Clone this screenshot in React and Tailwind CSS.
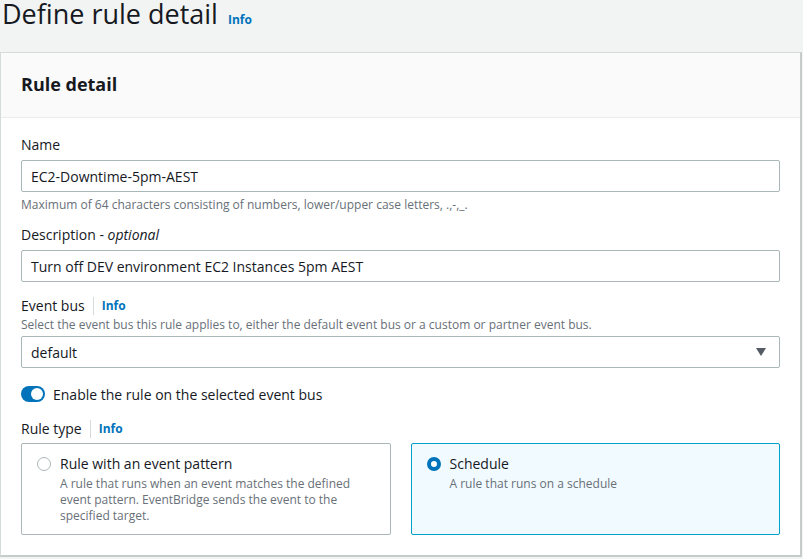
import React from "react";

const font = { fontFamily: '"Open Sans", "Noto Sans", Arial, sans-serif' };

function Info() {
  return <span className="text-[12px] font-bold text-[#0073bb]">Info</span>;
}

function LabelInfo({ children }) {
  return (
    <div className="flex items-center text-[14px] text-[#16191f] leading-[20px]">
      <span>{children}</span>
      <span className="mx-[8px] h-[18px] w-px bg-[#d5dbdb]" />
      <Info />
    </div>
  );
}

export default function App() {
  return (
    <div className="w-[803px] h-[559px] overflow-hidden bg-[#f2f3f3]" style={font}>
      <div className="flex items-start h-[52px] pl-[2px]">
        <h1 className="text-[27px] leading-[28px] text-[#16191f] font-normal">Define rule detail</h1>
        <span className="ml-[10px] mt-[9px] leading-[18px]"><Info /></span>
      </div>
      <div className="w-[802px] border border-[#d5dbdb] border-r-2 border-r-[#c6cccc] border-b-2 border-b-[#c6cccc] bg-white">
        <div className="h-[65px] bg-[#fafafa] border-b border-[#eaeded] flex items-center px-[20px]">
          <h2 className="text-[18px] font-bold text-[#16191f] leading-[24px] -mt-[2px]">Rule detail</h2>
        </div>
        <div className="px-[20px] pt-[16px] pb-[20px]">
          <div className="text-[14px] text-[#16191f] leading-[22px]">Name</div>
          <div className="mt-[4px] h-[32px] border border-[#aab7b8] rounded-[2px] flex items-center px-[9px] text-[14px] text-[#16191f]">
            EC2-Downtime-5pm-AEST
          </div>
          <div className="mt-[5px] text-[12px] text-[#687078] leading-[16px]">
            Maximum of 64 characters consisting of numbers, lower/upper case letters, .,-,_.
          </div>
          <div className="mt-[11px] text-[14px] text-[#16191f] leading-[22px]">
            Description - <i>optional</i>
          </div>
          <div className="mt-[4px] h-[32px] border border-[#aab7b8] rounded-[2px] flex items-center px-[9px] text-[14px] text-[#16191f]">
            Turn off DEV environment EC2 Instances 5pm AEST
          </div>
          <div className="mt-[14px]">
            <LabelInfo>Event bus</LabelInfo>
          </div>
          <div className="text-[12px] text-[#687078] leading-[18px]">
            Select the event bus this rule applies to, either the default event bus or a custom or partner event bus.
          </div>
          <div className="mt-[2px] h-[32px] border border-[#aab7b8] rounded-[2px] flex items-center justify-between pl-[9px] pr-[12px] text-[14px] text-[#16191f]">
            <span>default</span>
            <svg width="12" height="10" viewBox="0 0 12 10"><path d="M1 1h10L6 9z" fill="#545b64" /></svg>
          </div>
          <div className="mt-[17px] flex items-center h-[18px]">
            <div className="w-[24px] h-[16px] rounded-full bg-[#0073bb] flex items-center justify-end pr-[2px]">
              <div className="w-[12px] h-[12px] rounded-full bg-white" />
            </div>
            <span className="ml-[8px] text-[14px] text-[#16191f]">Enable the rule on the selected event bus</span>
          </div>
          <div className="mt-[16px]">
            <LabelInfo>Rule type</LabelInfo>
          </div>
          <div className="mt-[4px] grid grid-cols-2 gap-[20px]">
            <div className="h-[92px] border border-[#aab7b8] rounded-[2px] px-[15px] pt-[10px] flex">
              <div className="mt-[3px] w-[14px] h-[14px] rounded-full border border-[#aab7b8] bg-white shrink-0" />
              <div className="ml-[9px]">
                <div className="text-[14px] text-[#16191f] leading-[20px]">Rule with an event pattern</div>
                <div className="text-[12px] text-[#687078] leading-[16px] mt-[2px] w-[300px]">
                  A rule that runs when an event matches the defined event pattern. EventBridge sends the event to the specified target.
                </div>
              </div>
            </div>
            <div className="h-[92px] border border-[#00a1c9] bg-[#f1faff] rounded-[2px] px-[15px] pt-[10px] flex">
              <div className="mt-[3px] w-[14px] h-[14px] rounded-full border-[4px] border-[#0073bb] bg-white shrink-0" />
              <div className="ml-[9px]">
                <div className="text-[14px] text-[#16191f] leading-[20px]">Schedule</div>
                <div className="text-[12px] text-[#687078] leading-[16px] mt-[2px]">A rule that runs on a schedule</div>
              </div>
            </div>
          </div>
        </div>
      </div>
    </div>
  );
}
